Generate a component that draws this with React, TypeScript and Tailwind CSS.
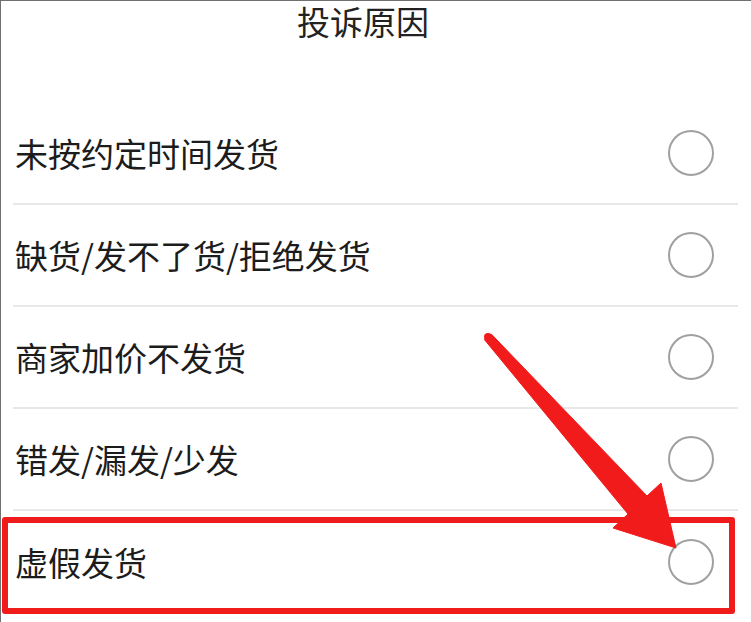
import React from 'react';

const reasons = [
  '未按约定时间发货',
  '缺货/发不了货/拒绝发货',
  '商家加价不发货',
  '错发/漏发/少发',
  '虚假发货',
];

const font = { fontFamily: '"Noto Sans CJK SC", "Noto Sans", sans-serif' };

export default function App() {
  return (
    <div
      className="relative w-[751px] h-[622px] overflow-hidden bg-white border-l border-t border-[#707070]"
      style={font}
    >
      {/* header */}
      <div className="h-[102px] flex justify-center pr-[26px]">
        <span className="text-[33px] leading-[40px] text-[#222]">投诉原因</span>
      </div>

      {/* reason list */}
      <div className="flex flex-col ml-[12px] w-[725px]">
        {reasons.map((r, i) => (
          <div
            key={r}
            className={
              i < reasons.length - 1
                ? 'h-[102px] flex items-center justify-between border-b-2 border-[#e8e8e8]'
                : 'h-[102px] flex items-center justify-between'
            }
          >
            <span className="text-[33px] leading-none text-[#1c1c1c] pl-[2px]">{r}</span>
            <span className="w-[46px] h-[46px] rounded-full border-2 border-[#a0a0a0] mr-[24px]" />
          </div>
        ))}
      </div>

      {/* annotation: highlight box */}
      <div className="absolute left-[1px] top-[516px] w-[733px] h-[97px] border-[6px] border-[#f01c1c] rounded-[3px]" />

      {/* annotation: arrow */}
      <svg className="absolute left-0 top-0" width="751" height="622" viewBox="0 0 751 622">
        <circle cx="487" cy="336" r="4" fill="#f21b1b" />
        <polygon
          points="490.5,333.3 646,495 660,482 675,547 612,527 627,513 483.5,338.7"
          fill="#f21b1b"
          stroke="#f21b1b"
          strokeLinejoin="round"
          strokeWidth="1"
        />
      </svg>
    </div>
  );
}
